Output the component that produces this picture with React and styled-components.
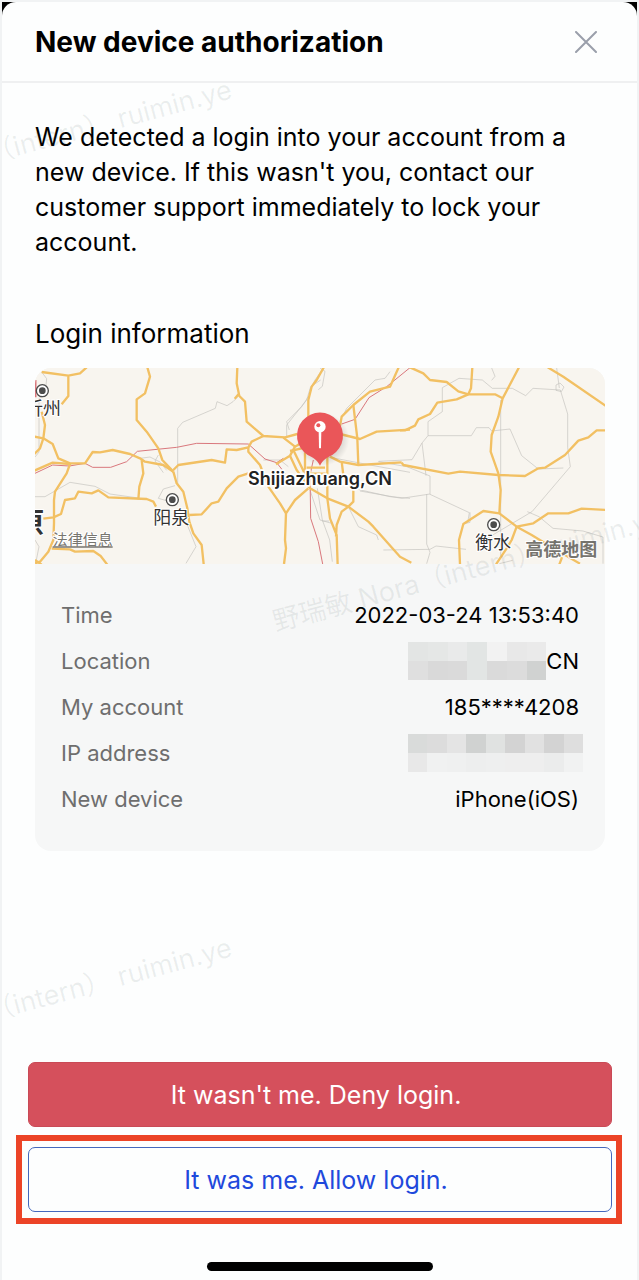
import React from 'react'
import styled, { createGlobalStyle } from 'styled-components'

const GlobalStyle = createGlobalStyle`
  * { box-sizing: border-box; }
  body {
    margin: 0;
    background: #f1f3f4;
    font-family: Inter, 'Noto Sans CJK SC', sans-serif;
    color: #000;
  }
`

const details = [
  { label: 'Time', value: '2022-03-24 13:53:40' },
  {
    label: 'Location',
    value: 'CN',
    mask: {
      cols: 7,
      width: 138,
      cells: ['#e3e5e4', '#e5e7e6', '#e9eaea', '#e2e5e4', '#f2f2f2', '#e8e8e8', '#eaeaea',
        '#dfdfdf', '#d9d9d9', '#dadada', '#e2e5e4', '#dadada', '#dcdcdc', '#d0d2d1'],
    },
  },
  { label: 'My account', value: '185****4208' },
  {
    label: 'IP address',
    mask: {
      cols: 9,
      width: 175,
      bleed: true,
      cells: ['#d9dbda', '#dcdcdc', '#e4e4e4', '#d0d2d1', '#e0e2e1', '#d3d3d3', '#e1e1e1', '#d3d3d3', '#dedede',
        '#e8e8e8', '#f0f1f1', '#eff0f0', '#edeeee', '#eeefef', '#eeeeee', '#eeeeee', '#ebecec', '#f1f2f2'],
    },
  },
  { label: 'New device', value: 'iPhone(iOS)' },
]

const watermarks = [
  { left: -154, top: 179 },
  { left: 277, top: 608 },
  { left: -154, top: 1037 },
]

const Roads = () => (
  <g fill="none" strokeLinejoin="round">
    <g stroke="#c4c3be" strokeWidth="2">
      <g transform="translate(-15 -174)">
        <path d="M15 560h30l75-43 75 12 45 23 85 12" />
        <path d="M443 525V355l15-18 98-42 5-20 30 12 18-12 15-15" />
        <path d="M330 445l30-4 30 15 20 25M385 565l15-28 35-10M385 565l28 8M470 640l28 70-30 50M385 435l-10 18 25 35" />
        <path d="M770 380v-35l60-75 12-40 30-20M35 186l15 20-5 50-18 10v160l-12 15M15 690l12 20-10 50" />
        <path d="M700 450h50l25 20M840 540l30 90 35 10" />
      </g>
      <g transform="translate(615 -9)">
        <path d="M148 195l-8-25 45-45 20-30M215 65l10-20 25-35M310 150l10-20 85-85 30-5 15-20" />
        <path d="M232 370l15 95 22 60 8 65M247 468h20M325 425l30 60 55 25 5 15M260 275l130 25 120 22M340 370l110 25 60 5" />
      </g>
      <g transform="translate(825 -24)">
        <path d="M205 305l85 15 70 28v55l118 55-5 30M150 393l125 22 85-13M350 402v150l10 25-10 34" />
        <path d="M397 155v-72l50-28 70 5 30 25h60l40 22 22-22 82 5 22 72 0 100 8 58-115 135-160 95" />
        <path d="M397 155l-43 30v42h130l15-24h38l8 10 55-6 35 80 50 40 75-3" />
        <path d="M354 227l-18 22-30 50-100 5M336 249l12 98M545 24l10 25-10 12M740 24l8 60M572 120v470M568 611l40-10" />
        <path d="M652 455l35 15 42 35 90 8 60 18v80M220 570l140-2 18-10 90 10M460 492l20-5v-30" />
        <path d="M30 24l15 10-8 45-12 10M738 75l12-6 12 12-8 14-16-4z" />
      </g>
    </g>
    <g stroke="#d9777c" strokeWidth="3">
      <g transform="translate(-15 -174)">
        <path d="M15 490l53-25 50 3 47-8 23 12h54l48-17 32-31 118-12 60-12 155 2 50 45 35 11 25 32M740 458l20-13" />
        <path d="M17 210v52" strokeWidth="5" />
      </g>
      <g transform="translate(615 -9)">
        <path d="M220 285l-10 45 2 130 23 70 13 67M305 177l40-14 42-65 53-33 70-57" />
      </g>
    </g>
    <g stroke="#f2c063" strokeWidth="7">
      <g transform="translate(-15 -174)">
        <path d="M35 186l80 11 35-7 20-18M115 197v61l-20 25" />
        <path d="M352 172l8 28-15 50-25 18v62l30 35 35 50 12 35 33 35" />
        <path d="M13 380l27 5 28 17 17 43 35 15h45l23-34 22 1 38-7 52 12 30 13 15 10 55 10 30 20" />
        <path d="M13 482l55-24 52 4-10 28-35 55-3 25v70l-2 50-15 35-25 30-15 5" />
        <path d="M35 305l10 40-5 40-10 30-17 17M335 450l5 40-12 40-3 38" />
        <path d="M40 626l30-4 23-10 12-42 30-5 10-20 40 5 20-9 30 21 115 5 20 8 8 15" />
        <path d="M65 716l55 2 15 7 55-2 22 15 20 26M15 750l20 14" />
        <path d="M430 485l10 35 20 25 12 50 6 40 12 35 25 35 6 57" />
        <path d="M430 480l15-15 100-15 40 8 5-40 30 2 35-8 10-17 35-17" />
        <path d="M478 615l37-2 30-33 20-5 25-40 35-35 30-10" />
        <path d="M622 172l-2 48 8 38 17 17 5 60 50 43 65 4 37-10M628 250l-14 16" />
        <path d="M655 412v13l35 40 25 65 35 50 18 30-3 80 3 25-6 47M768 610l27-40 40-35" />
      </g>
      <g transform="translate(615 -9)">
        <path d="M252 6l-22 39-15 20-10 40v60M130 218l35 27M108 298l42-26 15-27 25-15" />
        <path d="M150 272l20 43 40 55 52 30 63 25 60 45 15 15 40 45 40 45 34 18" />
        <path d="M160 255l32 66M195 262v64h62M200 308h55M150 258l45-10" />
        <path d="M262 270v130l8 60 20 50 3 90M325 425l-20 15-15 40-2 35M340 350v60l-15 15" />
        <path d="M270 275l30 15 55 10 130-8M305 290l5 40M355 300l-3-80-12-100" />
        <path d="M300 182l5-27 35-35 50-40 60-15 27-60M300 207l60 15 50-22 100-6" />
      </g>
      <g transform="translate(825 -24)">
        <path d="M275 308l5 7 135 26 35-6 115 10 80 3 40-23 20-2 60-38 40-43 30-10 25-21h30" />
        <path d="M270 211h15l30-14 10-19 35-16 22-34 58-10 35-15" />
        <path d="M300 22l40 18 20 20 50 6 35 28 30 9 80 0 23 12M487 22l-4 63-8 18" />
        <path d="M627 22l-49 93-13 55-20 55-3 50 23 65 7 50-4 70" />
        <path d="M713 22l47 28 128 88M450 613l-3-73 13-48 60-39 48 7 52 40 45 25 65 40 80 46" />
        <path d="M620 500l50-10 45-30h60l40-14 73 4M620 500l-15 40-15 25-32 48M748 613l7-18-10-20" />
      </g>
    </g>
  </g>
)

const CityDot = ({ x, y }) => (
  <g stroke="#4c4c4c">
    <circle cx={x} cy={y} r="18" fill="#fff" strokeWidth="4" />
    <circle cx={x} cy={y} r="10" fill="#4c4c4c" stroke="none" />
  </g>
)

const LoginMap = () => (
  <MapSvg viewBox="0 0 1710 588" role="img" aria-label="Map of the login location">
    <defs>
      <radialGradient id="pinShadow">
        <stop offset="0.6" stopColor="#000" stopOpacity="0.16" />
        <stop offset="1" stopColor="#000" stopOpacity="0" />
      </radialGradient>
    </defs>
    <rect width="1710" height="588" fill="#f8f5ef" />
    <Roads />
    <CityDot x={22} y={68} />
    <CityDot x={412} y={395} />
    <CityDot x={1376} y={470} />
    <MapText x="-30" y="142">忻州</MapText>
    <MapText x="355" y="469">阳泉</MapText>
    <MapText x="1320" y="544">衡水</MapText>
    <MapText x="-56" y="496" $size={84} $weight={700}>原</MapText>
    <a href="#legal">
      <MapText x="53" y="532" $size={45} $fill="#77756f">法律信息</MapText>
      <path d="M53 537h180" stroke="#77756f" strokeWidth="4" />
    </a>
    <MapText x="1471" y="565" $size={54} $weight={700} $fill="#77756f">高德地图</MapText>
    <circle cx="863" cy="214" r="80" fill="url(#pinShadow)" />
    <path d="M855 293c-8-17-20-24-37-32a69 69 0 1 1 74 0c-17 8-29 15-37 32z" fill="#ea5659" />
    <path d="M851 188h8l-1 50q-3 7-6 0z" fill="#fff" />
    <circle cx="855" cy="176" r="17" fill="#fff" />
    <circle cx="850" cy="172" r="6" fill="#ea5659" />
    <PinLabel x="855" y="350">Shijiazhuang,CN</PinLabel>
  </MapSvg>
)

const App = () => {
  return (
    <Screen>
      <GlobalStyle />
      <Sheet>
        <Header>
          <Title>New device authorization</Title>
          <CloseButton aria-label="Close">
            <svg width="22" height="22" viewBox="0 0 22 22" fill="none" stroke="#9a9fab" strokeWidth="2" strokeLinecap="round">
              <path d="M1 1l20 20M21 1L1 21" />
            </svg>
          </CloseButton>
        </Header>
        <Content>
          <Message>
            We detected a login into your account from a new device. If this wasn't you, contact our
            customer support immediately to lock your account.
          </Message>
          <SectionTitle>Login information</SectionTitle>
          <Card>
            <LoginMap />
            <Details>
              {details.map(item => (
                <Row key={item.label}>
                  <Label>{item.label}</Label>
                  <Value>
                    {item.mask && (
                      <Mask $cols={item.mask.cols} $width={item.mask.width} $bleed={item.mask.bleed}>
                        {item.mask.cells.map((color, i) => <MaskCell key={i} $color={color} />)}
                      </Mask>
                    )}
                    {item.value}
                  </Value>
                </Row>
              ))}
            </Details>
          </Card>
        </Content>
        <Actions>
          <DenyButton>It wasn't me. Deny login.</DenyButton>
          <Highlight>
            <AllowButton>It was me. Allow login.</AllowButton>
          </Highlight>
        </Actions>
        <HomeIndicator />
      </Sheet>
      <WatermarkLayer aria-hidden="true">
        {watermarks.map(mark => (
          <Watermark key={mark.top} $left={mark.left} $top={mark.top}>
            野瑞敏 Nora（intern） ruimin.ye
          </Watermark>
        ))}
      </WatermarkLayer>
    </Screen>
  )
}

const Screen = styled.div`
  position: relative;
  display: flex;
  min-height: 100vh;
  padding: 2px 2px 0;
  background: linear-gradient(#000, #000) 2px 2px / calc(100% - 4px) 20px no-repeat, #f1f3f4;
`

const Sheet = styled.main`
  flex: 1;
  display: flex;
  flex-direction: column;
  min-width: 0;
  background: #fdfefe;
  border-radius: 14px 14px 0 0;
`

const Header = styled.header`
  display: flex;
  align-items: center;
  justify-content: space-between;
  height: 81px;
  padding: 0 40px 0 33px;
  border-bottom: 2px solid #eff0f1;
`

const Title = styled.h1`
  margin: 0;
  font-size: 28px;
  line-height: 36px;
  font-weight: 700;
`

const CloseButton = styled.button`
  display: flex;
  padding: 0;
  border: 0;
  background: none;
  cursor: pointer;
`

const Content = styled.section`
  padding: 37px 32px 0 33px;
`

const Message = styled.p`
  margin: 0;
  font-size: 25px;
  line-height: 35px;
`

const SectionTitle = styled.h2`
  margin: 56px 0 16px;
  font-size: 26px;
  line-height: 36px;
  font-weight: 400;
`

const Card = styled.div`
  overflow: hidden;
  border-radius: 16px;
  background: #f6f7f7;
`

const MapSvg = styled.svg`
  display: block;
  width: 100%;
`

const MapText = styled.text`
  font-family: 'Noto Sans CJK SC', sans-serif;
  font-size: ${p => p.$size || 54}px;
  font-weight: ${p => p.$weight || 400};
  fill: ${p => p.$fill || '#333'};
  stroke: #fff;
  stroke-width: 6px;
  paint-order: stroke;
`

const PinLabel = styled.text`
  font-size: 54px;
  font-weight: 600;
  text-anchor: middle;
  fill: #222;
  stroke: #fff;
  stroke-width: 10px;
  stroke-linejoin: round;
  paint-order: stroke;
`

const Details = styled.dl`
  margin: 0;
  padding: 28px 26px 29px;
`

const Row = styled.div`
  display: flex;
  align-items: center;
  justify-content: space-between;
  height: 46px;
`

const Label = styled.dt`
  font-size: 22px;
  color: #6e6e6e;
`

const Value = styled.dd`
  display: flex;
  align-items: center;
  margin: 0;
  font-size: 22px;
`

const Mask = styled.span`
  display: grid;
  grid-template-columns: repeat(${p => p.$cols}, 1fr);
  grid-auto-rows: 19px;
  width: ${p => p.$width}px;
  margin-right: ${p => (p.$bleed ? '-4px' : '0')};
`

const MaskCell = styled.span`
  background: ${p => p.$color};
`

const Actions = styled.div`
  display: flex;
  flex-direction: column;
  gap: 8px;
  margin-top: auto;
  padding: 40px 15px 38px 14px;
`

const Button = styled.button`
  height: 65px;
  padding: 0 8px 0 0;
  border-radius: 7px;
  font-family: inherit;
  font-size: 25px;
  cursor: pointer;
`

const DenyButton = styled(Button)`
  margin: 0 10px 0 12px;
  border: 1px solid #c94a56;
  background: #d5505c;
  color: #fff;
`

const Highlight = styled.div`
  display: flex;
  padding: 6px 4px 6px 6px;
  border: 6px solid #ec4427;
`

const AllowButton = styled(Button)`
  flex: 1;
  border: 1px solid #4468bd;
  background: #fdfefe;
  color: #1f49dc;
`

const HomeIndicator = styled.div`
  align-self: center;
  width: 226px;
  height: 9px;
  margin-bottom: 9px;
  border-radius: 5px;
  background: #000;
`

const WatermarkLayer = styled.div`
  position: absolute;
  inset: 0;
  overflow: hidden;
  pointer-events: none;
`

const Watermark = styled.span`
  position: absolute;
  left: ${p => p.$left}px;
  top: ${p => p.$top}px;
  font-size: 27px;
  line-height: 28px;
  white-space: pre;
  color: rgba(60, 80, 80, 0.09);
  transform: rotate(-15deg);
  transform-origin: left bottom;
`

export default App
